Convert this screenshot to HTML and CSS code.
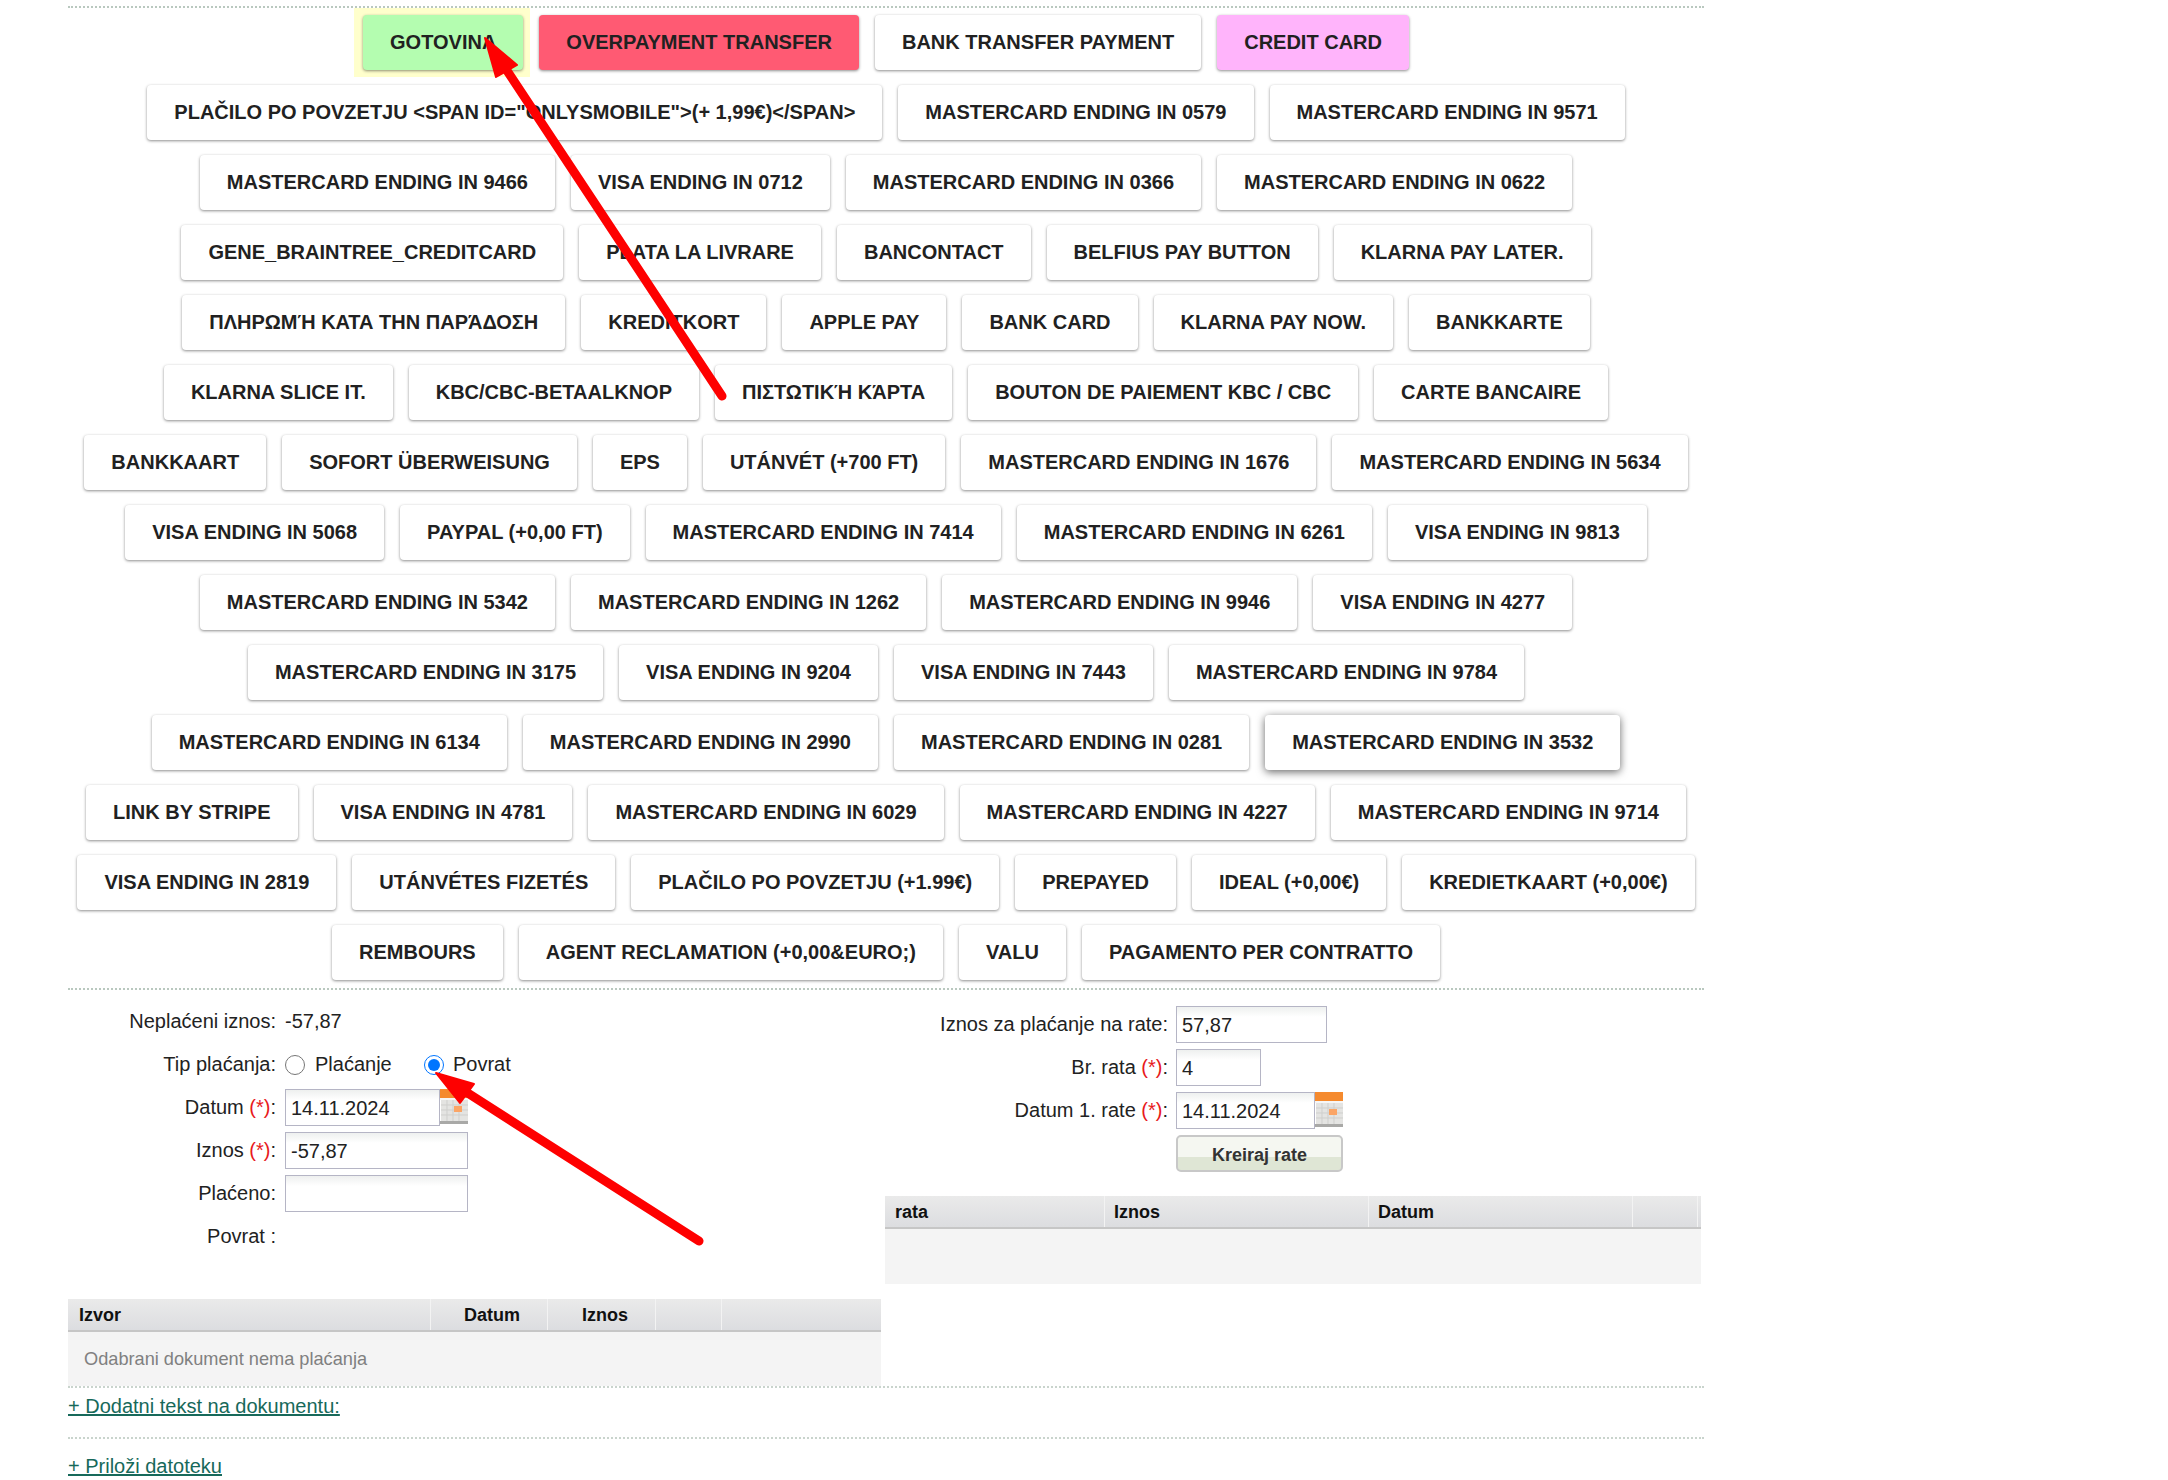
FILE: index.html
```html
<!DOCTYPE html>
<html lang="hr">
<head>
<meta charset="utf-8">
<title>Plaćanje</title>
<link rel="stylesheet" href="styles.css">
</head>
<body>
<div class="page">
  <div class="methods">
    <span class="chosen"><button class="pay pay-green">GOTOVINA</button></span>
    <button class="pay pay-red">OVERPAYMENT TRANSFER</button>
    <button class="pay">BANK TRANSFER PAYMENT</button>
    <button class="pay pay-pink">CREDIT CARD</button>
    <button class="pay">PLAČILO PO POVZETJU &lt;SPAN ID="ONLYSMOBILE"&gt;(+ 1,99€)&lt;/SPAN&gt;</button>
    <button class="pay">MASTERCARD ENDING IN 0579</button>
    <button class="pay">MASTERCARD ENDING IN 9571</button>
    <button class="pay">MASTERCARD ENDING IN 9466</button>
    <button class="pay">VISA ENDING IN 0712</button>
    <button class="pay">MASTERCARD ENDING IN 0366</button>
    <button class="pay">MASTERCARD ENDING IN 0622</button>
    <button class="pay">GENE_BRAINTREE_CREDITCARD</button>
    <button class="pay">PLATA LA LIVRARE</button>
    <button class="pay">BANCONTACT</button>
    <button class="pay">BELFIUS PAY BUTTON</button>
    <button class="pay">KLARNA PAY LATER.</button>
    <button class="pay">ΠΛΗΡΩΜΉ ΚΑΤΑ ΤΗΝ ΠΑΡΆΔΟΣΗ</button>
    <button class="pay">KREDITKORT</button>
    <button class="pay">APPLE PAY</button>
    <button class="pay">BANK CARD</button>
    <button class="pay">KLARNA PAY NOW.</button>
    <button class="pay">BANKKARTE</button>
    <button class="pay">KLARNA SLICE IT.</button>
    <button class="pay">KBC/CBC-BETAALKNOP</button>
    <button class="pay">ΠΙΣΤΩΤΙΚΉ ΚΆΡΤΑ</button>
    <button class="pay">BOUTON DE PAIEMENT KBC / CBC</button>
    <button class="pay">CARTE BANCAIRE</button>
    <button class="pay">BANKKAART</button>
    <button class="pay">SOFORT ÜBERWEISUNG</button>
    <button class="pay">EPS</button>
    <button class="pay">UTÁNVÉT (+700 FT)</button>
    <button class="pay">MASTERCARD ENDING IN 1676</button>
    <button class="pay">MASTERCARD ENDING IN 5634</button>
    <button class="pay">VISA ENDING IN 5068</button>
    <button class="pay">PAYPAL (+0,00 FT)</button>
    <button class="pay">MASTERCARD ENDING IN 7414</button>
    <button class="pay">MASTERCARD ENDING IN 6261</button>
    <button class="pay">VISA ENDING IN 9813</button>
    <button class="pay">MASTERCARD ENDING IN 5342</button>
    <button class="pay">MASTERCARD ENDING IN 1262</button>
    <button class="pay">MASTERCARD ENDING IN 9946</button>
    <button class="pay">VISA ENDING IN 4277</button>
    <button class="pay">MASTERCARD ENDING IN 3175</button>
    <button class="pay">VISA ENDING IN 9204</button>
    <button class="pay">VISA ENDING IN 7443</button>
    <button class="pay">MASTERCARD ENDING IN 9784</button>
    <button class="pay">MASTERCARD ENDING IN 6134</button>
    <button class="pay">MASTERCARD ENDING IN 2990</button>
    <button class="pay">MASTERCARD ENDING IN 0281</button>
    <button class="pay pay-hover">MASTERCARD ENDING IN 3532</button>
    <button class="pay">LINK BY STRIPE</button>
    <button class="pay">VISA ENDING IN 4781</button>
    <button class="pay">MASTERCARD ENDING IN 6029</button>
    <button class="pay">MASTERCARD ENDING IN 4227</button>
    <button class="pay">MASTERCARD ENDING IN 9714</button>
    <button class="pay">VISA ENDING IN 2819</button>
    <button class="pay">UTÁNVÉTES FIZETÉS</button>
    <button class="pay">PLAČILO PO POVZETJU (+1.99€)</button>
    <button class="pay">PREPAYED</button>
    <button class="pay">IDEAL (+0,00€)</button>
    <button class="pay">KREDIETKAART (+0,00€)</button>
    <button class="pay">REMBOURS</button>
    <button class="pay">AGENT RECLAMATION (+0,00&amp;EURO;)</button>
    <button class="pay">VALU</button>
    <button class="pay">PAGAMENTO PER CONTRATTO</button>
  </div>

  <div class="panels">
    <div class="panel-left">
      <div class="row"><span class="lab">Neplaćeni iznos:</span><span>-57,87</span></div>
      <div class="row">
        <span class="lab">Tip plaćanja:</span>
        <label class="opt opt-first"><input class="radio" type="radio" name="tip">Plaćanje</label>
        <label class="opt"><input class="radio radio-tight" type="radio" name="tip" checked>Povrat</label>
      </div>
      <div class="row">
        <span class="lab">Datum <em class="req">(*)</em>:</span>
        <input class="field field-date" value="14.11.2024">
        <svg class="cal" viewBox="0 0 28 35" width="28" height="35"><rect width="28" height="9" fill="#f58a2e"/><rect y="9" width="28" height="2" fill="#f6f6f6"/><rect x="1" y="11" width="27" height="21" fill="#e4e4e2"/><path d="M7 11v21M13 11v21M19 11v21M1 16h27M1 21h27M1 26h27" stroke="#cfcfcd" stroke-width="1"/><rect x="14" y="17" width="8" height="6" fill="#fba566"/><rect y="32" width="28" height="3" fill="#a9a9a7"/></svg>
      </div>
      <div class="row"><span class="lab">Iznos <em class="req">(*)</em>:</span><input class="field field-wide" value="-57,87"></div>
      <div class="row"><span class="lab">Plaćeno:</span><input class="field field-wide" value=""></div>
      <div class="row"><span class="lab">Povrat :</span></div>
      <div class="grid grid-docs">
        <div class="grid-head">
          <span class="th th-izvor">Izvor</span>
          <span class="th th-c th-dat">Datum</span>
          <span class="th th-c th-izn">Iznos</span>
          <span class="th th-e1"></span>
          <span class="th th-fill"></span>
        </div>
        <div class="grid-empty">Odabrani dokument nema plaćanja</div>
      </div>
    </div>

    <div class="panel-right">
      <div class="row"><span class="lab lab-r">Iznos za plaćanje na rate:</span><input class="field field-amount" value="57,87"></div>
      <div class="row"><span class="lab lab-r">Br. rata <em class="req">(*)</em>:</span><input class="field field-num" value="4"></div>
      <div class="row">
        <span class="lab lab-r">Datum 1. rate <em class="req">(*)</em>:</span>
        <input class="field field-date2" value="14.11.2024">
        <svg class="cal" viewBox="0 0 28 35" width="28" height="35"><rect width="28" height="9" fill="#f58a2e"/><rect y="9" width="28" height="2" fill="#f6f6f6"/><rect x="1" y="11" width="27" height="21" fill="#e4e4e2"/><path d="M7 11v21M13 11v21M19 11v21M1 16h27M1 21h27M1 26h27" stroke="#cfcfcd" stroke-width="1"/><rect x="14" y="17" width="8" height="6" fill="#fba566"/><rect y="32" width="28" height="3" fill="#a9a9a7"/></svg>
      </div>
      <div class="row"><span class="lab lab-r"></span><button class="create">Kreiraj rate</button></div>
      <div class="grid grid-rates">
        <div class="grid-head">
          <span class="th th-rata">rata</span>
          <span class="th th-mid">Iznos</span>
          <span class="th th-mid">Datum</span>
          <span class="th th-e2"></span>
          <span class="th th-fill"></span>
        </div>
        <div class="grid-blank"></div>
      </div>
    </div>
  </div>

  <div class="link-row"><a class="more" href="#">+ Dodatni tekst na dokumentu:</a></div>
  <div class="link-row link-row-second"><a class="more" href="#">+ Priloži datoteku</a></div>

  <svg class="arrows" width="2168" height="1480" viewBox="0 0 2168 1480">
    <g fill="#fe0000" stroke="#fe0000" stroke-linejoin="round">
      <path d="M722 396 L504 66" stroke-width="9" stroke-linecap="round" fill="none"/>
      <path d="M485 38 L517 65 L496 77 Z" stroke-width="2"/>
      <path d="M699 1241 L463 1090" stroke-width="9" stroke-linecap="round" fill="none"/>
      <path d="M436 1073 L474 1084 L460 1103 Z" stroke-width="2"/>
    </g>
  </svg>
</div>
</body>
</html>
```
FILE: styles.css
```css
* { box-sizing: border-box; }
html, body { margin: 0; padding: 0; background: #fff; }
body { font-family: "Liberation Sans", Arial, sans-serif; font-size: 20px; color: #222; height: 1480px; overflow: hidden; }
.page { position: relative; width: 1636px; margin-left: 68px; padding-top: 6px; height: 1480px; }
.methods {
  display: flex; flex-wrap: wrap; justify-content: center; align-content: flex-start;
  height: 984px; row-gap: 1px;
  border-top: 2px dotted #b9c8bf; border-bottom: 2px dotted #b9c8bf;
}
.chosen { display: flex; margin: 0 1px 0 -1px; background: #ffffcc; }
.pay {
  height: 55px; margin: 7px 8px; padding: 0 27px;
  font: bold 20px "Liberation Sans", Arial, sans-serif; color: #212121;
  background: #fff; border: 0; border-radius: 4px;
  box-shadow: 0 1px 3px rgba(0,0,0,.45); white-space: nowrap;
}
.chosen .pay { margin: 7px 7px 7px 9px; }
.pay-green { background: #b4fdb0; }
.pay-red { background: #ff5a73; }
.pay-pink { background: #ffb4fb; }
.pay-hover { box-shadow: 0 2px 9px rgba(0,0,0,.6); }
.panels { display: flex; padding-top: 13px; }
.panel-left { width: 817px; }
.panel-right { flex: 1; padding-top: 3px; }
.row { display: flex; align-items: center; height: 37px; margin-bottom: 6px; color: #222; }
.lab { width: 208px; margin-right: 9px; text-align: right; flex: none; }
.lab-r { width: 283px; margin-right: 8px; }
.req { font-style: normal; color: #e8191c; }
.opt { display: flex; align-items: center; }
.opt-first { width: 139px; }
.radio { width: 20px; height: 20px; margin: 0 10px 0 0; flex: none; }
.radio-tight { margin-right: 9px; }
.field {
  height: 37px; padding: 1px 5px 0; font: 20px "Liberation Sans", Arial, sans-serif; color: #222;
  border: 1px solid #b5b5c5; border-radius: 0;
  background: linear-gradient(#eef0ef, #fff 10px);
}
.field-date { width: 155px; }
.field-wide { width: 183px; }
.field-amount { width: 151px; }
.field-num { width: 85px; }
.field-date2 { width: 139px; }
.cal { flex: none; margin-bottom: 2px; }
.create {
  width: 167px; height: 37px; padding: 3px 0 0; border: 2px solid #c8c8c8; border-radius: 5px;
  font: bold 18px "Liberation Sans", Arial, sans-serif; color: #333;
  background: linear-gradient(#f5f7f1 60%, #dfe6d5 60%);
}
.grid-docs { margin-top: 44px; width: 813px; }
.grid-rates { margin-top: 24px; width: 816px; }
.grid-head {
  display: flex; height: 33px;
  background: linear-gradient(#eaeaea, #dcdde0);
  border-bottom: 2px solid #c6c6c6;
}
.th { display: flex; align-items: center; flex: none; height: 100%; padding-top: 1px; border-right: 1px solid #f3f3f3; font-size: 18px; font-weight: bold; color: #111; }
.th-c { justify-content: center; }
.th-izvor { width: 363px; padding-left: 11px; }
.th-dat { width: 117px; padding-left: 6px; }
.th-izn { width: 108px; padding-left: 7px; }
.th-e1 { width: 66px; }
.th-fill { flex: 1; border-right: 0; }
.th-rata { width: 220px; padding-left: 10px; }
.th-mid { width: 264px; padding-left: 9px; }
.th-e2 { width: 65px; }
.grid-empty { display: flex; align-items: center; height: 54px; padding-left: 16px; background: #f4f4f4; color: #808080; font-size: 18.2px; }
.grid-blank { height: 55px; background: #f4f4f4; }
.link-row { height: 51px; padding-top: 7px; border-top: 2px dotted #c9d4cd; }
.link-row-second { padding-top: 16px; }
.more { color: #17695a; font-size: 20px; }
.arrows { position: absolute; left: -68px; top: 0; pointer-events: none; }
```
